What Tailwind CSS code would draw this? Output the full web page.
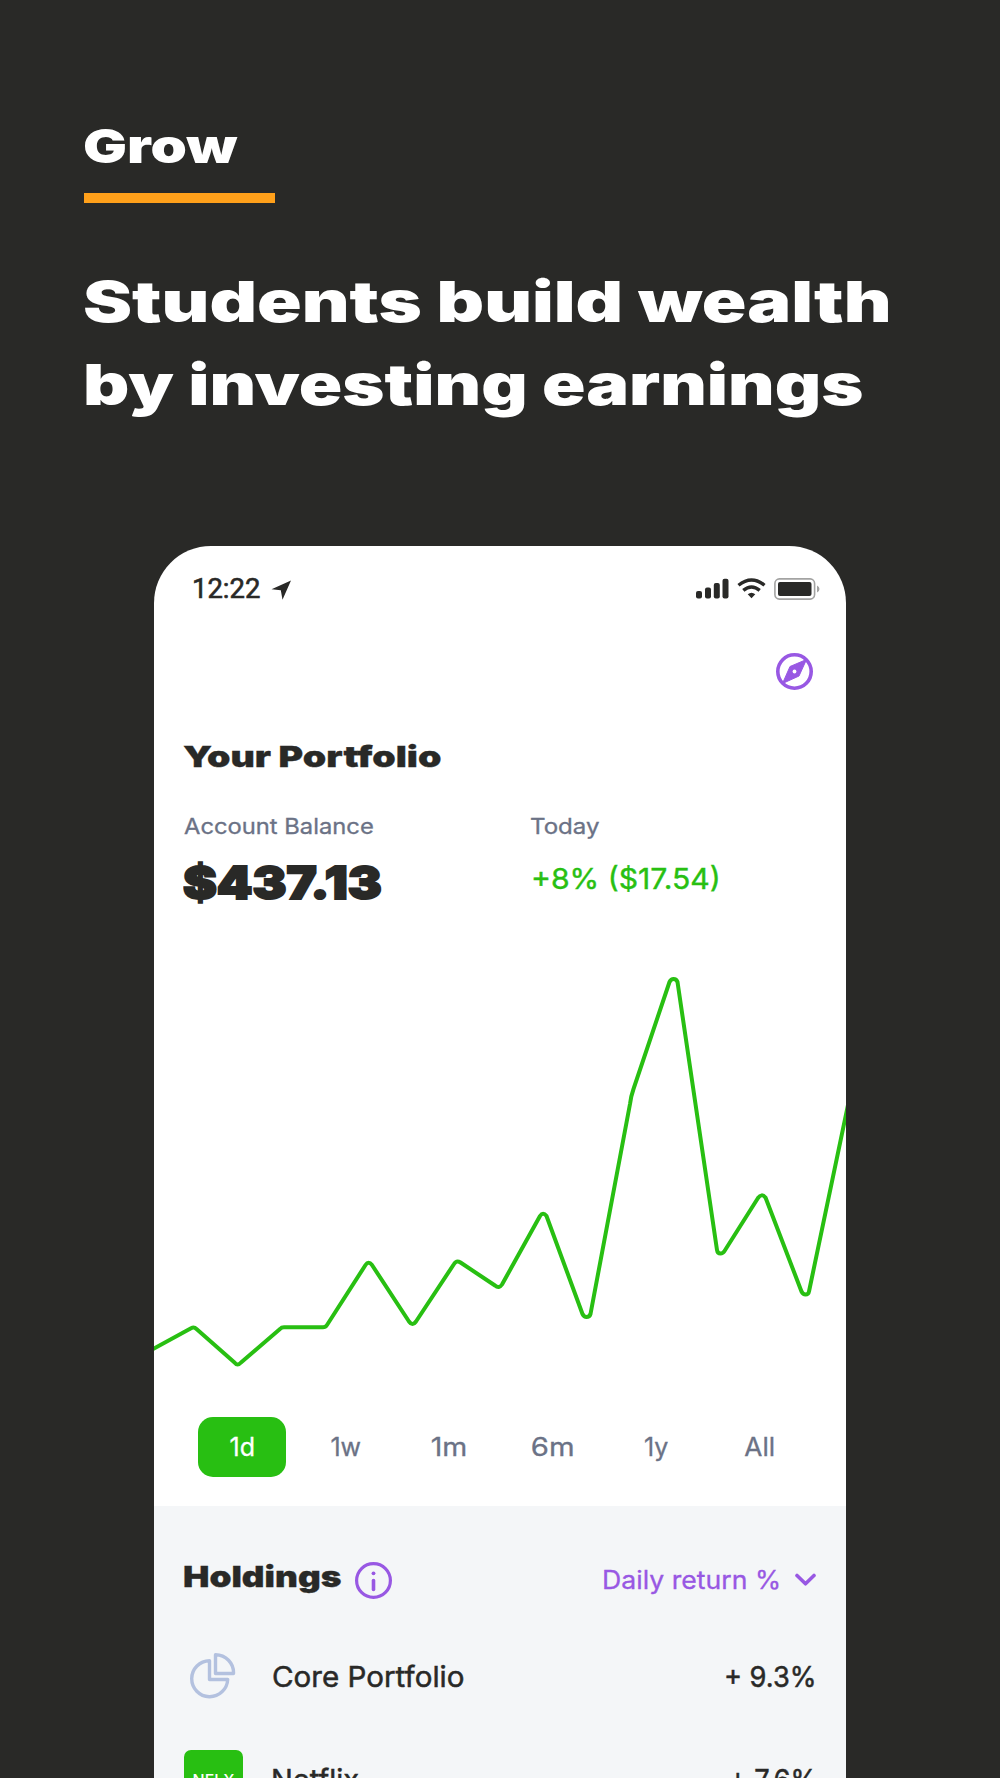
<!DOCTYPE html>
<html lang="en">
<head>
    <meta charset="UTF-8">
    <meta name="viewport" content="width=device-width, initial-scale=1.0">
    <title>Grow - Your Portfolio</title>
    <script src="https://cdn.jsdelivr.net/npm/@tailwindcss/browser@4"></script>
</head>
<body class="bg-[#292927] font-['Inter',sans-serif]">
    <div class="w-[1000px] h-[1778px] overflow-hidden pt-[118px]">

        <!-- Headline -->
        <header class="pl-[84px] text-white font-black">
            <p class="w-fit text-[47px] leading-[56px] origin-left scale-x-[1.24] -ml-px">Grow</p>
            <div class="mt-[19px] w-[191px] h-[10px] bg-[#ffa01a]"></div>
            <h1 class="mt-[57px] -ml-px text-[57px] leading-[83px] whitespace-nowrap">
                <span class="block w-fit origin-left scale-x-[1.293]">Students build wealth</span>
                <span class="block w-fit origin-left scale-x-[1.26]">by investing earnings</span>
            </h1>
        </header>

        <!-- Phone -->
        <main class="mt-[120px] ml-[154px] w-[692px] h-[1300px] rounded-t-[57px] bg-white text-[#292927] overflow-hidden">

            <!-- Status bar -->
            <div class="pt-[22px] pl-[38px] pr-[26px] flex items-center justify-between">
                <div class="flex items-center h-10">
                    <span class="pt-px font-['Roboto',sans-serif] text-[28px] leading-10 origin-left scale-x-[0.98] [-webkit-text-stroke:0.6px_#292927]">12:22</span>
                    <svg class="ml-[9px] mt-1" width="21" height="21" viewBox="0 0 21 21" fill="currentColor">
                        <path d="M20 0.500L0.500 9.200L9.800 10.200L11.500 19.800Z"/>
                    </svg>
                </div>
                <div class="flex items-center h-10">
                    <svg width="33" height="21" viewBox="0 0 33 21" fill="currentColor">
                        <rect x="0" y="13" width="6" height="7.500" rx="2"/>
                        <rect x="9" y="9.500" width="6" height="11" rx="2"/>
                        <rect x="17.800" y="5" width="6" height="15.500" rx="2"/>
                        <rect x="26.500" y="0.800" width="6" height="19.700" rx="2"/>
                    </svg>
                    <svg class="ml-2" width="29" height="21" viewBox="0 0 29 21" fill="none" stroke="currentColor" stroke-width="3.400">
                        <path d="M1.500 7.200Q14.500 -3.300 27.500 7.200"/>
                        <path d="M6.300 12.400Q14.500 5.600 22.700 12.400"/>
                        <path d="M10.700 16.300Q14.500 13.200 18.300 16.300L14.500 20.300Z" fill="currentColor" stroke="none"/>
                    </svg>
                    <svg class="ml-[8px] mt-px" width="46" height="22" viewBox="0 0 46 22">
                        <rect x="0.900" y="0.900" width="39.700" height="20.200" rx="4.500" fill="none" stroke="#a3a3a2" stroke-width="1.600"/>
                        <rect x="4" y="4" width="33.500" height="14" rx="2" fill="#292927"/>
                        <path d="M43 7.500Q45.500 8.500 45.500 11T43 14.500Z" fill="#a3a3a2"/>
                    </svg>
                </div>
            </div>

            <!-- Compass button -->
            <div class="mt-[45px] pr-[33px] flex justify-end">
                <svg width="37" height="37" viewBox="0 0 37 37">
                    <circle cx="18.500" cy="18.500" r="16.700" fill="none" stroke="#9858e3" stroke-width="3.600"/>
                    <path fill="#9858e3" stroke="#9858e3" stroke-width="1" d="M30.500 6.500L14 13.500L6.500 30.500L23 23Z"/>
                    <circle cx="18.500" cy="18.500" r="1.900" fill="#fff"/>
                </svg>
            </div>

            <!-- Portfolio summary -->
            <section class="pl-[30px] mt-[47px]">
                <h2 class="w-fit -ml-px text-[29px] leading-10 font-black origin-left scale-x-[1.295] [-webkit-text-stroke:0.3px_#292927]">Your Portfolio</h2>
                <div class="mt-[33px] h-[98px] grid grid-cols-[347px_1fr]">
                    <div>
                        <p class="w-fit text-[21.5px] leading-8 text-[#6b7286] origin-left scale-x-[1.105] [-webkit-text-stroke:0.3px_#6b7286]">Account Balance</p>
                        <p class="w-fit mt-[15px] -ml-px text-[45px] leading-[52px] font-black origin-left scale-x-[1.13] [-webkit-text-stroke:2px_#292927]">$437.13</p>
                    </div>
                    <div>
                        <p class="w-fit -ml-px text-[21.5px] leading-8 text-[#6b7286] origin-left scale-x-[1.12] [-webkit-text-stroke:0.3px_#6b7286]">Today</p>
                        <p class="w-fit mt-[17px] text-[29px] leading-10 text-[#28bf12] origin-left scale-x-[1.04] [-webkit-text-stroke:0.4px_#28bf12]">+8% ($17.54)</p>
                    </div>
                </div>
            </section>

            <!-- Chart -->
            <svg class="block" width="692" height="509" viewBox="154 908 692 509" fill="none" stroke="#28bf12" stroke-width="4" stroke-linejoin="round">
                <path d="M152 1349.500L191.500 1328Q194 1326.500 196.500 1329L234.500 1362.500Q237.500 1366.500 241 1362.500L280 1329Q281.500 1327.300 284 1327.300H323Q325.500 1327.300 327 1325L365.500 1265Q368.500 1260.500 372 1265L409 1321.500Q412.500 1326.500 416 1321.500L454 1264Q456.500 1260 460.500 1262.500L495 1285.500Q499 1289 502 1284.500L540 1216Q543 1211.500 546.500 1216L582.500 1314Q584 1317 586.500 1317Q589.500 1317 590.500 1314L630 1104Q631 1096 633.500 1089L669.500 982Q671 979 673.500 979Q676.500 979 677.500 982L717 1250Q717.500 1253.500 720.500 1253.500Q723 1253.500 724.500 1251L758 1198Q761.500 1193 765.500 1197.500L801.500 1291.500Q803 1294.500 805.500 1294.500Q808.500 1294.500 809 1291.500L848 1105"/>
            </svg>

            <!-- Range tabs -->
            <div class="pl-[36.5px] flex text-[25px] leading-[60px] text-[#6b7286] [-webkit-text-stroke:0.3px_currentColor]">
                <div class="w-[103.5px] flex justify-center"><span class="w-[88px] h-[60px] rounded-[15px] bg-[#28bf12] text-white text-center"><span class="inline-block">1d</span></span></div>
                <div class="w-[103.5px] text-center"><span class="inline-block">1w</span></div>
                <div class="w-[103.5px] text-center"><span class="inline-block scale-x-[1.14]">1m</span></div>
                <div class="w-[103.5px] text-center"><span class="inline-block scale-x-[1.17]">6m</span></div>
                <div class="w-[103.5px] text-center"><span class="inline-block">1y</span></div>
                <div class="w-[103.5px] text-center"><span class="inline-block scale-x-[1.05]">All</span></div>
            </div>

            <!-- Holdings -->
            <section class="mt-[29px] pt-[54px] pl-[30px] pr-[29px] h-[400px] bg-[#f4f6f8]">
                <div class="h-10 flex items-center justify-between">
                    <div class="flex items-center">
                        <h2 class="w-[171px] -ml-px mr-px pb-[7px] text-[29px] leading-[33px] font-black [-webkit-text-stroke:0.3px_#292927]"><span class="inline-block origin-left scale-x-[1.215]">Holdings</span></h2>
                        <svg width="37" height="37" viewBox="0 0 37 37" fill="none" stroke="#9858e3">
                            <circle cx="18.500" cy="18.500" r="16.900" stroke-width="3.200"/>
                            <path d="M18.500 18.500V27.500" stroke-width="3.600" stroke-linecap="round"/>
                            <circle cx="18.500" cy="11.300" r="1.900" fill="#9858e3" stroke="none"/>
                        </svg>
                    </div>
                    <div class="flex items-center text-[#9858e3]">
                        <span class="text-[25px] leading-10 origin-right scale-x-[1.065] [-webkit-text-stroke:0.3px_#9858e3]">Daily return %</span>
                        <svg class="ml-[14px] mr-px" width="21" height="14" viewBox="0 0 21 14" fill="none" stroke="currentColor" stroke-width="3.600" stroke-linecap="round" stroke-linejoin="round">
                            <path d="M2 2.500L10.500 10.800L19 2.500"/>
                        </svg>
                    </div>
                </div>

                <div class="mt-[47px] h-[58px] flex items-center text-[29px]">
                    <svg class="ml-[6px]" width="46" height="46" viewBox="0 0 46 46" fill="none" stroke="#b3c1df" stroke-width="3.400" stroke-linejoin="round">
                        <path d="M19.500 7.700A18 18 0 1 0 37.700 26.500H19.500Z"/>
                        <path d="M25.500 1.700A18 18 0 0 1 43.500 20.500H25.500Z"/>
                    </svg>
                    <span class="ml-[36px] pt-[2px] origin-left scale-x-[1.02] [-webkit-text-stroke:0.5px_#292927]">Core Portfolio</span>
                    <span class="ml-auto pt-[2px] origin-right scale-x-[0.94] [-webkit-text-stroke:0.5px_#292927]">+ 9.3%</span>
                </div>

                <div class="mt-[45px] h-[58px] flex items-center text-[29px]">
                    <div class="w-[59px] h-[58px] rounded-[7px] bg-[#28bf12] text-white text-[16px] font-medium leading-[60px] text-center">NFLX</div>
                    <span class="ml-[28px] pt-[2px] [-webkit-text-stroke:0.5px_#292927]">Netflix</span>
                    <span class="ml-auto pt-[2px] origin-right scale-x-[0.94] [-webkit-text-stroke:0.5px_#292927]">+ 7.6%</span>
                </div>
            </section>
        </main>
    </div>
</body>
</html>
